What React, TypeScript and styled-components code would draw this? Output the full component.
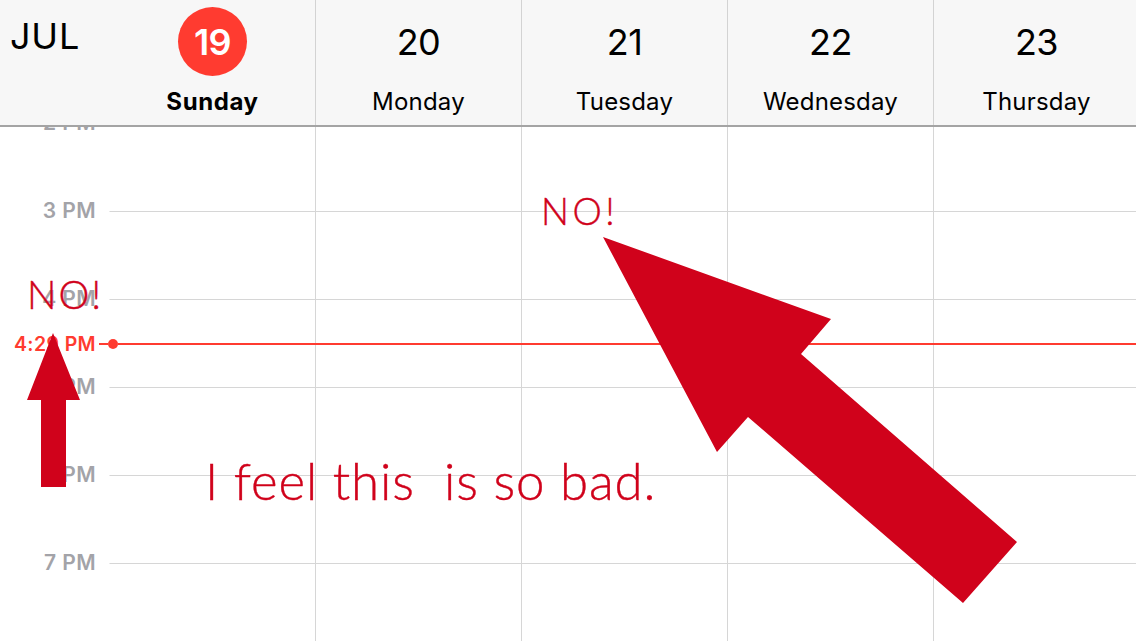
import React from "react";
import styled, { createGlobalStyle } from "styled-components";

const GlobalStyle = createGlobalStyle`
  html, body { margin: 0; padding: 0; background: #ffffff; }
  body { font-family: Inter, "Liberation Sans", sans-serif; }
`;

const GUTTER = 109;
const COL = 206;
const ROW = 88;

const Page = styled.div`
  position: relative;
  width: 1136px;
  height: 641px;
  overflow: hidden;
  display: flex;
  flex-direction: column;
  background: #ffffff;
`;

const Header = styled.header`
  flex: none;
  height: 125px;
  display: grid;
  grid-template-columns: ${GUTTER}px repeat(5, ${COL}px);
  background: #f7f7f7;
  border-bottom: 2px solid #a4a4a4;
  position: relative;
  z-index: 2;
`;

const Month = styled.div`
  padding: 14px 0 0 10px;
  font-size: 36px;
  line-height: 44px;
  font-weight: 400;
  color: #000;
  letter-spacing: 0.8px;
`;

const DayCell = styled.div<{ $first?: boolean }>`
  display: flex;
  flex-direction: column;
  align-items: center;
  padding-top: 7px;
  border-left: ${(p) => (p.$first ? "1px solid transparent" : "1px solid #d3d3d3")};
`;

const DayNumber = styled.div<{ $today?: boolean }>`
  width: 69px;
  height: 69px;
  border-radius: 50%;
  display: flex;
  align-items: center;
  justify-content: center;
  font-size: 36px;
  font-weight: ${(p) => (p.$today ? 600 : 400)};
  color: ${(p) => (p.$today ? "#ffffff" : "#000000")};
  background: ${(p) => (p.$today ? "#ff3b30" : "transparent")};
  letter-spacing: -0.5px;
`;

const DayName = styled.div<{ $today?: boolean }>`
  margin-top: 12px;
  font-size: 24px;
  line-height: 28px;
  font-weight: ${(p) => (p.$today ? 700 : 400)};
  color: #000;
  letter-spacing: ${(p) => (p.$today ? "0.6px" : "0.2px")};
`;

const Body = styled.div`
  position: relative;
  flex: 1;
  overflow: hidden;
`;

const Grid = styled.div`
  margin-top: -4px;
  display: grid;
  grid-template-columns: ${GUTTER}px repeat(5, ${COL}px);
  grid-auto-rows: ${ROW}px;
`;

const HourLabel = styled.div`
  margin-top: -12px;
  height: 24px;
  line-height: 24px;
  padding-right: 13px;
  text-align: right;
  font-size: 21px;
  font-weight: 600;
  color: #a3a3a8;
  letter-spacing: 0.4px;
`;

const Cell = styled.div<{ $first?: boolean }>`
  border-top: 1px solid #d6d6d6;
  border-left: ${(p) => (p.$first ? "1px solid transparent" : "1px solid #d6d6d6")};
`;

const NowRow = styled.div`
  position: absolute;
  left: 0;
  right: 0;
  top: 205px;
  height: 24px;
  display: flex;
  align-items: center;
`;

const NowLabel = styled.div`
  width: 96px;
  text-align: right;
  font-size: 19.5px;
  font-weight: 600;
  color: #ff3b30;
  letter-spacing: 0.4px;
`;

const NowTick = styled.div`
  margin-left: 3px;
  width: 9px;
  height: 2px;
  background: #ff3b30;
`;

const NowDot = styled.div`
  width: 10px;
  height: 10px;
  border-radius: 50%;
  background: #ff3b30;
`;

const NowLine = styled.div`
  flex: 1;
  height: 2px;
  background: #ff3b30;
`;

const Annotations = styled.svg`
  position: absolute;
  left: 0;
  top: 0;
  z-index: 3;
  pointer-events: none;
`;

const Note = styled.div<{ $size: number; $spacing: number }>`
  position: absolute;
  z-index: 4;
  font-family: Lato, "Liberation Sans", sans-serif;
  font-weight: 300;
  font-size: ${(p) => p.$size}px;
  letter-spacing: ${(p) => p.$spacing}px;
  line-height: 1;
  color: #d0021b;
  white-space: pre;
  -webkit-text-stroke: 0.4px #d0021b;
`;

const days = [
  { n: 19, name: "Sunday", today: true },
  { n: 20, name: "Monday" },
  { n: 21, name: "Tuesday" },
  { n: 22, name: "Wednesday" },
  { n: 23, name: "Thursday" },
];

const hours = ["2 PM", "3 PM", "4 PM", "5 PM", "6 PM", "7 PM"];

export default function App() {
  return (
    <>
      <GlobalStyle />
      <Page>
        <Header>
          <Month>JUL</Month>
          {days.map((d, i) => (
            <DayCell key={d.n} $first={i === 0}>
              <DayNumber $today={d.today}>{d.n}</DayNumber>
              <DayName $today={d.today}>{d.name}</DayName>
            </DayCell>
          ))}
        </Header>
        <Body>
          <Grid>
            {hours.map((h) => (
              <React.Fragment key={h}>
                <HourLabel>{h}</HourLabel>
                {days.map((d, i) => (
                  <Cell key={d.n} $first={i === 0} />
                ))}
              </React.Fragment>
            ))}
          </Grid>
          <NowRow>
            <NowLabel>4:29 PM</NowLabel>
            <NowTick />
            <NowDot />
            <NowLine />
          </NowRow>
        </Body>
        <Annotations width="1136" height="641" viewBox="0 0 1136 641">
          <polygon
            fill="#d0021b"
            points="603,237 831,319 801,354 1017,542 963,603 748,417 717,452"
          />
          <polygon
            fill="#d0021b"
            points="53,333 80,400 66,400 66,487 41,487 41,400 27,400"
          />
        </Annotations>
        <Note $size={39} $spacing={2} style={{ left: 27, top: 275 }}>NO!</Note>
        <Note $size={37} $spacing={3.5} style={{ left: 541, top: 192 }}>NO!</Note>
        <Note $size={51} $spacing={0.85} style={{ left: 205, top: 455 }}>I feel this  is so bad.</Note>
      </Page>
    </>
  );
}
